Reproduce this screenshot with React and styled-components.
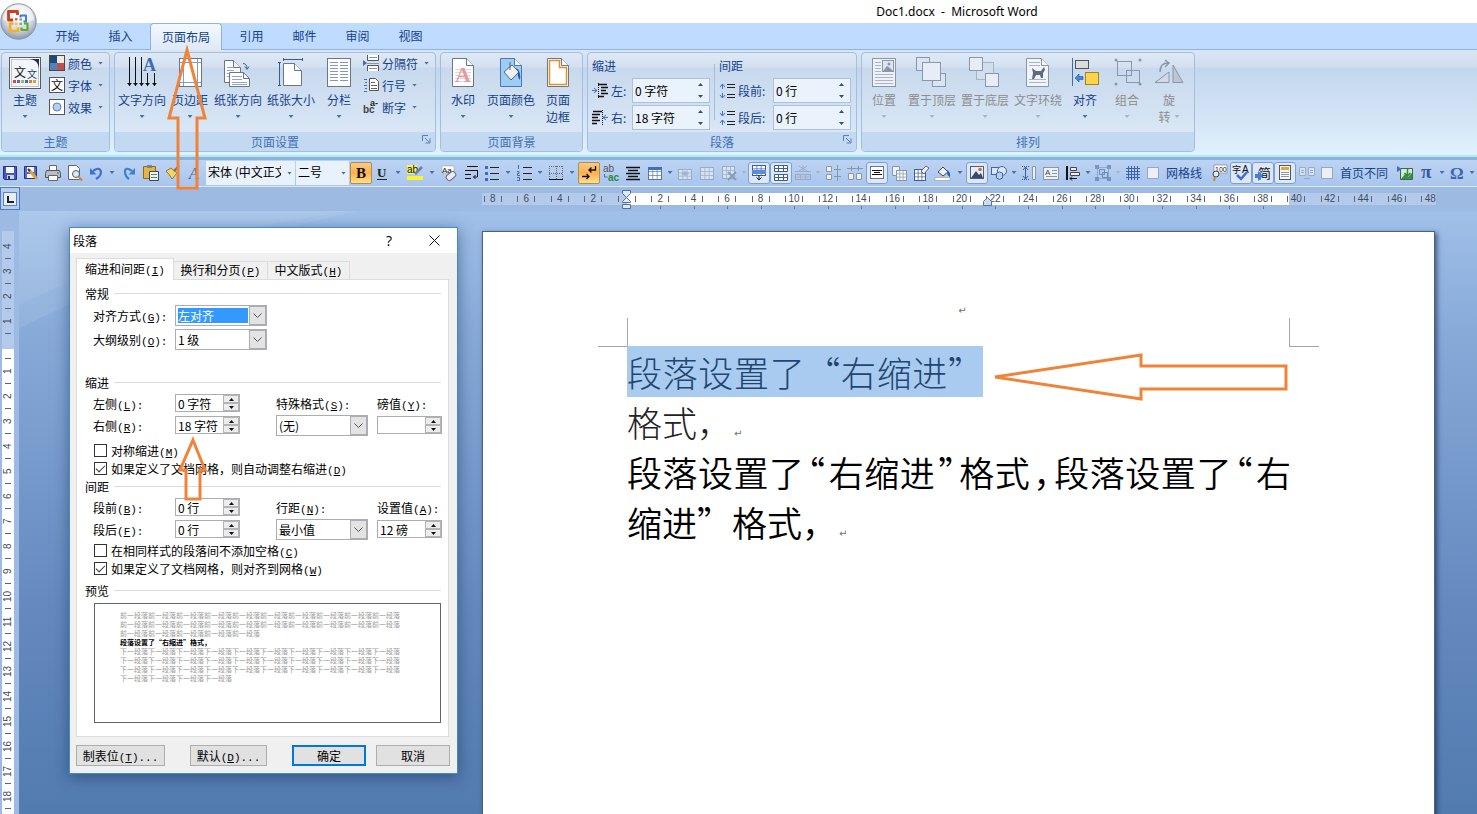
import React from "react";
import styled, { createGlobalStyle, css } from "styled-components";

const SANS = `"Noto Sans CJK SC", "Noto Sans", sans-serif`;
const ORANGE = "#f0833a";

const GlobalStyle = createGlobalStyle`
  *, *::before, *::after { box-sizing: border-box; }
  body { margin: 0; font-family: ${SANS}; font-size: 12px; color: #000; }
  button, input, select { font: inherit; color: inherit; margin: 0; padding: 0; border: 0; background: none; border-radius: 0; }
  button, select { cursor: pointer; }
  svg { display: block; flex: none; overflow: visible; }
`;

/* ---------- window frame ---------- */

const Window = styled.div`
  position: relative;
  display: flex;
  flex-direction: column;
  height: 100vh;
  overflow: hidden;
  background: #9dbbe2;
`;

const TitleBar = styled.header`
  flex: none;
  display: flex;
  align-items: center;
  justify-content: center;
  height: 23px;
  padding-left: 437px;
  background: #fff;
  font-family: "Noto Sans", ${SANS};
  font-size: 12px;
  white-space: pre;
`;

const OrbButton = styled.button`
  position: absolute;
  left: 0;
  top: 3px;
  z-index: 2;
`;

const TabStrip = styled.nav`
  flex: none;
  display: flex;
  align-items: flex-end;
  height: 27px;
  padding-left: 41px;
  background: #bfdbff;
  border-bottom: 1px solid #8db2e3;
`;

const RibbonTab = styled.button`
  width: ${(p) => (p.$active ? 72 : 53)}px;
  height: 26px;
  line-height: 26px;
  color: #15428b;
  ${(p) =>
    p.$active &&
    css`
      height: 27px;
      line-height: 24px;
      margin: 0 3px -1px 3px;
      border: 1px solid #8db2e3;
      border-bottom: 0;
      border-radius: 4px 4px 0 0;
      background: linear-gradient(#f3f8fe, #dde9f7);
    `}
`;

/* ---------- ribbon ---------- */

const Ribbon = styled.section`
  flex: none;
  display: flex;
  gap: 4px;
  height: 107px;
  padding: 2px 1px 3px;
  background: linear-gradient(#dbe6f4 0, #cfddef 17px, #c4d6ec 18px, #d7e8f8 80px, #dff2fd 104px);
  border-bottom: 2px solid #a9ecf5;
  overflow: hidden;
`;

const GroupBox = styled.div`
  flex: none;
  display: flex;
  flex-direction: column;
  width: ${(p) => p.$width}px;
  border: 1px solid #a3bfdf;
  border-radius: 4px;
  background: linear-gradient(#dfe9f5 0, #d3e0f1 14px, #c8d9ed 15px, #d9e7f6 80px);
  overflow: hidden;
`;

const GroupBody = styled.div`
  flex: 1;
  display: flex;
  align-items: flex-start;
  padding-top: 2px;
`;

const GroupLabel = styled.div`
  position: relative;
  height: 19px;
  line-height: 19px;
  text-align: center;
  color: #3f6fb6;
  background: #c2d9f1;
`;

const Launcher = styled.button`
  position: absolute;
  right: 4px;
  top: 3px;
`;

const BigButton = styled.button`
  display: flex;
  flex-direction: column;
  align-items: center;
  width: ${(p) => p.$width}px;
  padding-top: 2px;
  line-height: 17px;
  color: ${(p) => (p.disabled ? "#8d8d8d" : "#15428b")};
  white-space: nowrap;
`;

const BigLabel = styled.span`
  margin-top: 2px;
`;

const SecondLine = styled.span`
  display: flex;
  align-items: center;
  gap: 4px;
  height: 17px;
`;

const Triangle = styled.span`
  width: 5px;
  height: 3px;
  background: ${(p) => (p.$dim ? "#a9b4c4" : "#4a6fa5")};
  clip-path: polygon(0 0, 100% 0, 50% 100%);
`;

const SmallColumn = styled.div`
  display: flex;
  flex-direction: column;
  margin-top: -3px;
  padding-left: ${(p) => p.$indent}px;
`;

const SmallButton = styled.button`
  display: flex;
  align-items: center;
  gap: 3px;
  height: 22px;
  color: #15428b;
  white-space: nowrap;
`;

const SmallText = styled.span`
  margin-right: 3px;
`;

const MeasureColumn = styled.div`
  padding-left: 4px;
`;

const MeasureTitle = styled.div`
  height: 22px;
  line-height: 22px;
  color: #15428b;
`;

const MeasureRow = styled.div`
  display: flex;
  align-items: center;
  height: 27px;
`;

const MeasureLabel = styled.label`
  width: ${(p) => p.$width}px;
  padding-left: 3px;
  color: #15428b;
`;

const MeasureField = styled.div`
  display: flex;
  width: 78px;
  height: 25px;
  border: 1px solid #abc1de;
  background: #eaf2fb;
`;

const MeasureInput = styled.input`
  flex: 1;
  min-width: 0;
  padding-left: 2px;
  outline: 0;
`;

const Steps = styled.span`
  display: flex;
  flex-direction: column;
  width: 17px;
`;

const Step = styled.button`
  flex: 1;
  display: grid;
  place-items: center;
`;

const ColumnRule = styled.div`
  width: 1px;
  height: 56px;
  margin: 9px 0 0 4px;
  background: #a3bfdf;
`;

/* ---------- quick access toolbar ---------- */

const QuickBar = styled.section`
  flex: none;
  display: flex;
  align-items: center;
  height: 30px;
  padding-bottom: 1px;
  border-top: 3px solid #8fb2dc;
  border-bottom: 1px solid #dbe9fb;
  background: linear-gradient(#bdd3f2, #a9c6ee);
  overflow: hidden;
`;

const Tool = styled.button`
  flex: none;
  display: grid;
  place-items: center;
  width: ${(p) => p.$width || 22}px;
  height: 22px;
  opacity: ${(p) => (p.disabled ? 0.6 : 1)};
  ${(p) =>
    p.$framed &&
    css`
      border: 1px solid #7e9fd0;
      border-radius: 3px;
      background: #dce8f8;
    `}
  ${(p) =>
    p.$pressed &&
    css`
      border: 1px solid #b08c4f;
      border-radius: 2px;
      background: linear-gradient(#fbc98a, #fdb14f 50%, #ffe08a);
    `}
`;

const ToolCaret = styled.button`
  flex: none;
  display: flex;
  align-items: center;
  justify-content: center;
  width: ${(p) => (p.$tight ? 8 : 12)}px;
  height: 22px;
`;

const ComboBox = styled.div`
  flex: none;
  position: relative;
  width: ${(p) => p.$width}px;
  height: 24px;
  margin-right: 1px;
  background: #e9f1fb;
`;

const ComboSelect = styled.select`
  appearance: none;
  width: 100%;
  height: 24px;
  padding: 0 14px 2px 2px;
  outline: 0;
`;

const ComboCaret = styled.span`
  position: absolute;
  right: 3px;
  top: 11px;
  display: flex;
  pointer-events: none;
`;

const ToolCheck = styled.label`
  flex: none;
  display: flex;
  align-items: center;
  gap: 7px;
  padding: 0 6px 0 3px;
  color: #15428b;
`;

const ToolCheckBox = styled.input.attrs({ type: "checkbox" })`
  appearance: none;
  width: 12px;
  height: 12px;
  border: 1px solid #8ea9cf;
  background: #eceff3;
`;

/* ---------- rulers and document ---------- */

const Workspace = styled.main`
  flex: 1;
  display: grid;
  grid-template: 24px 1fr / 19px 1fr;
  min-height: 0;
`;

const TabCorner = styled.button`
  display: grid;
  place-items: center;
  width: 20px;
  height: 23px;
  border: 1px solid #4f79c0;
  background: #b7cdec;
`;

const RulerRow = styled.div`
  display: flex;
  justify-content: flex-end;
  padding: 6px 41px 0 0;
`;

const HRuler = styled.div`
  position: relative;
  flex: none;
  width: 954px;
  height: 12px;
  background: linear-gradient(90deg, #b3caeb 145px, #fff 145px, #fff 807px, #b3caeb 807px);
`;

const HScale = styled.div`
  display: flex;
  overflow-x: clip;
`;

const HCells = styled.div`
  flex: 1;
  display: flex;
  margin: 0 -11px 0 -6px;
`;

const HCell = styled.span`
  flex: 1 1 0;
  display: flex;
  align-items: center;
  justify-content: center;
  min-width: 0;
  height: 12px;
  font: 10px/12px "Liberation Sans", sans-serif;
  color: #434c5c;
  &::before, &::after {
    content: "";
    width: 1px;
    height: 6px;
    background: #5b6678;
  }
`;

const HNumber = styled.span`
  position: relative;
  width: 16px;
  text-align: center;
  ${(p) =>
    p.$notch &&
    css`
      &::after {
        content: "";
        position: absolute;
        left: 8px;
        top: 13px;
        width: 1px;
        height: 3px;
        background: #5d7ba8;
      }
    `}
`;

const IndentMark = styled.svg`
  position: absolute;
  left: ${(p) => p.$left}px;
  top: ${(p) => p.$top}px;
`;

const RulerColumn = styled.div`
  display: flex;
  padding: 20px 5px 0 2px;
  overflow: hidden;
  min-height: 0;
`;

const VRuler = styled.div`
  flex: 1;
  padding-top: 3px;
  background: linear-gradient(#b3caeb 118px, #fff 118px);
`;

const VCell = styled.span`
  display: flex;
  align-items: center;
  height: 25px;
  writing-mode: vertical-rl;
  transform: rotate(180deg);
  justify-content: center;
  position: relative;
  width: 12px;
  font: 10px/12px "Liberation Sans", sans-serif;
  color: #434c5c;
  &::after {
    content: "";
    position: absolute;
    left: 3px;
    top: 0;
    width: 6px;
    height: 1px;
    background: #5b6678;
  }
`;

const Canvas = styled.div`
  position: relative;
  display: flex;
  justify-content: flex-end;
  padding: 20px 42px 0 0;
  min-height: 0;
  overflow: hidden;
  background: linear-gradient(#a0c0e9 0, #88aad9 120px, #7699cb 260px, #6489bf 400px, #527bb0 603px);
`;

const Swoosh = styled.svg`
  position: absolute;
  left: 0;
  top: 0;
`;

const Page = styled.article`
  position: relative;
  flex: none;
  width: 953px;
  min-height: 600px;
  border: 1px solid #4a6180;
  border-bottom: 0;
  background: #fff;
  box-shadow: 2px 2px 5px rgba(20, 40, 80, 0.7);
`;

const HeaderLine = styled.div`
  padding: 69px 0 0 6px;
  height: 86px;
  text-align: center;
  line-height: 16px;
`;

const CropRow = styled.div`
  display: flex;
  justify-content: space-between;
  margin: 0 115px;
`;

const CropMark = styled.span`
  width: 30px;
  height: 29px;
  border: 0 solid #a6a6a6;
  border-bottom-width: 1px;
  border-${(p) => p.$side}-width: 1px;
`;

const TextArea = styled.div`
  padding: 0 143px 0 144px;
`;

const Paragraph = styled.p`
  margin: 0;
  padding-right: ${(p) => p.$indent || 0}px;
  font-size: 35px;
  line-height: 50px;
  font-weight: ${(p) => (p.$strong ? 350 : 300)};
  color: ${(p) => (p.$strong ? "#000" : "#222")};
  text-align: justify;
`;

const Selection = styled.span`
  background: #a9cbf0;
  color: #1f4670;
`;

const Punct = styled.span`
  padding: 0 3px;
  font-feature-settings: "halt";
`;

const ReturnMark = styled.span`
  margin-left: 2px;
  font: 10px "DejaVu Sans", sans-serif;
  color: #707070;
`;

const Arrow = styled.svg`
  position: absolute;
  left: ${(p) => p.$left}px;
  top: ${(p) => p.$top}px;
  z-index: 3;
  pointer-events: none;
`;

/* ---------- paragraph dialog ---------- */

const DialogBox = styled.div.attrs({ role: "dialog", "aria-label": "段落" })`
  position: absolute;
  left: 69px;
  top: 227px;
  z-index: 2;
  width: 389px;
  padding-bottom: 7px;
  border: 1px solid #3f8ecb;
  background: #f0f0f0;
  box-shadow: 0 3px 14px rgba(20, 40, 80, 0.5);
`;

const DialogTitle = styled.div`
  display: flex;
  align-items: center;
  height: 25px;
  padding: 0 17px 0 3px;
  background: #fff;
`;

const DialogName = styled.h2`
  flex: 1;
  margin: 0;
  font-size: 12px;
  font-weight: 400;
`;

const HelpButton = styled.button`
  width: 14px;
  margin-right: 33px;
  font: 14px "Open Sans", sans-serif;
`;

const DialogTabs = styled.div`
  display: flex;
  align-items: flex-end;
  height: 26px;
  padding-left: 6px;
`;

const DialogTab = styled.button`
  width: ${(p) => p.$width}px;
  height: 18px;
  border: 1px solid #dcdcdc;
  border-left-width: 0;
  border-bottom: 0;
  line-height: 16px;
  ${(p) =>
    p.$active &&
    css`
      position: relative;
      z-index: 1;
      height: 22px;
      margin-bottom: -1px;
      border-left-width: 1px;
      background: #fff;
    `}
`;

const Panel = styled.form`
  margin: 0 8px 0 6px;
  padding: 4px 7px 13px 8px;
  border: 1px solid #dcdcdc;
  background: #fff;
`;

const Legend = styled.h3`
  display: flex;
  align-items: center;
  gap: 5px;
  height: 18px;
  margin: ${(p) => p.$space || 0}px 0 1px;
  font-size: 12px;
  font-weight: 400;
  &::after {
    content: "";
    flex: 1;
    height: 1px;
    background: #dcdcdc;
  }
`;

const FieldGrid = styled.div`
  display: grid;
  grid-template-columns: 82px 101px 101px 65px;
  grid-auto-rows: ${(p) => p.$row}px;
  align-items: center;
  margin-left: 8px;
`;

const Mono = styled.span`
  font-family: "Liberation Mono", monospace;
  font-size: 11px;
`;

const DropBox = styled.div`
  position: relative;
  width: 92px;
  height: 21px;
  border: 1px solid #abadb3;
  background: #fff;
`;

const DropSelect = styled.select`
  appearance: none;
  display: block;
  width: 100%;
  height: 19px;
  padding: 2px 18px 2px 2px;
  line-height: 15px;
  outline: 0;
  ${(p) =>
    p.$focused &&
    css`
      color: #fff;
      background: linear-gradient(#3399ff, #3399ff) content-box;
    `}
`;

const DropArrow = styled.span`
  position: absolute;
  right: 0;
  top: 0;
  display: grid;
  place-items: center;
  width: 17px;
  height: 19px;
  border: 1px solid #abadb3;
  background: #e3e3e3;
  pointer-events: none;
`;

const SpinBox = styled.div`
  display: flex;
  width: 65px;
  height: 18px;
  border: 1px solid #abadb3;
  background: #fff;
`;

const SpinInput = styled.input`
  flex: 1;
  min-width: 0;
  padding-left: 2px;
  outline: 0;
`;

const SpinSteps = styled.span`
  display: flex;
  flex-direction: column;
  width: 16px;
`;

const SpinStep = styled.button`
  flex: 1;
  display: grid;
  place-items: center;
  border: 1px solid #b4b4b4;
  background: #ececec;
`;

const CheckList = styled.div`
  margin: ${(p) => p.$space}px 0 0 9px;
`;

const CheckRow = styled.label`
  display: flex;
  align-items: center;
  gap: 4px;
  height: 18px;
`;

const CheckInput = styled.input.attrs({ type: "checkbox" })`
  appearance: none;
  display: grid;
  place-items: center;
  width: 13px;
  height: 13px;
  border: 1px solid #333;
  background: #fff;
  &:checked::before {
    content: "";
    width: 9px;
    height: 5px;
    border: solid #333;
    border-width: 0 0 1px 1px;
    transform: translateY(-1px) rotate(-45deg);
  }
`;

const Preview = styled.div`
  height: 120px;
  margin: 4px 0 0 9px;
  padding: 7px 25px;
  border: 1px solid #646464;
  font-size: 7px;
  line-height: 9px;
  color: #9a9a9a;
  white-space: nowrap;
`;

const PreviewLine = styled.div`
  height: 9px;
  color: ${(p) => (p.$current ? "#000" : "inherit")};
  font-weight: ${(p) => (p.$current ? 700 : 400)};
`;

const DialogActions = styled.div`
  display: flex;
  gap: 10px;
  margin: 8px 7px 0 6px;
`;

const ActionButton = styled.button`
  width: ${(p) => p.$width}px;
  height: 21px;
  margin-right: ${(p) => (p.$apart ? 15 : 0)}px;
  border: ${(p) => (p.$primary ? "2px solid #0078d7" : "1px solid #adadad")};
  background: #e1e1e1;
`;

/* ---------- drawings ---------- */

const B = "#3f5f94";
const G = "#8a97ab";

const Doc = ({ x = 5.5, y = 1.5, w = 21, h = 28, fill = "#fff", stroke = "#6c7688" }) => (
  <>
    <path d={`M${x} ${y}h${w - 7}l7 7v${h - 7}h${-w}z`} fill={fill} stroke={stroke} />
    <path d={`M${x + w - 7} ${y}v7h7`} fill="#f4f7fb" stroke={stroke} />
  </>
);

const lines = (x1, x2, ys, color = "#8fa5c8") =>
  ys.map((y) => <path key={`${x1}-${y}`} d={`M${x1} ${y}.5H${x2}`} stroke={color} />);

const big = {
  theme: (
    <>
      <rect x=".5" y=".5" width="31" height="31" fill="#fff" stroke="#5a5a5a" />
      <rect x="2.5" y="2.5" width="27" height="27" fill="#f2f6fb" stroke="#b8c2d0" />
      <path d="M21 2h9v9q-1-8-9-9z" fill="#1d2f57" />
      <text x="5" y="20" fontSize="12">文</text>
      <text x="18" y="21" fontSize="10" fill="#24406e">文</text>
      {["#c0504d", "#7a5fa0", "#9bbb59", "#3d6fb5", "#d8812f", "#e0a030"].map((c, i) => (
        <rect key={c} x={4 + i * 4} y="23" width="3" height="3" fill={c} />
      ))}
    </>
  ),
  textdir: (
    <>
      <path d="M3.500 0v29M9.500 0v29M15.500 0v29M21.500 16v13M28.500 16v13" stroke="#111" />
      <path d="M1 26h5l-2.500 3zM7 26h5l-2.500 3zM13 26h5l-2.500 3zM19 26h5l-2.500 3zM26 26h5l-2.500 3z" fill="#111" />
      <text x="17" y="14" fontSize="18" fontWeight="700" fontFamily="Liberation Serif" fill="#3d6cb0">A</text>
    </>
  ),
  margins: (
    <>
      <rect x="5.500" y="1.500" width="22" height="28" fill="#fff" stroke="#6c7688" />
      <path d="M9.500 2v27M23.500 2v27M6 5.500h21M6 25.500h21" stroke="#7e9bcd" />
    </>
  ),
  orient: (
    <>
      <Doc x={2.5} y={3.5} w={16} h={22} />
      {lines(5, 12, [10, 13, 16, 19])}
      <path d="M7.500 15.500h14l6 6v8h-20z" fill="#fff" stroke="#6c7688" />
      <path d="M21.500 15.500v6h6" fill="none" stroke="#6c7688" />
      {lines(10, 20, [19, 22])}
      {lines(10, 25, [25, 27])}
      <path d="M21 6.500q4 0 4 5m-2-2l2 3 2-3" fill="none" stroke="#3f5f94" />
    </>
  ),
  size: (
    <>
      <Doc x={8.5} y={6.5} w={18} h={22} />
      <path d="M9 2.500h18M8.500 1v3M27.500 1v3M4.500 6v23M3 5.500h3M3 28.500h3" stroke="#3b5a92" fill="none" />
    </>
  ),
  columns: (
    <>
      <rect x="4.500" y="1.500" width="23" height="28" fill="#fff" stroke="#6c7688" />
      {lines(7, 15, [5, 8, 11, 14, 17, 20, 23], "#8398bd")}
      {lines(17, 25, [5, 8, 11, 14, 17, 20, 23], "#8398bd")}
    </>
  ),
  watermark: (
    <>
      <Doc />
      {lines(8, 24, [12, 15, 18, 21, 24], "#d7dce4")}
      <text x="8" y="25" fontSize="22" fontWeight="700" fontFamily="Liberation Serif" fill="#e79a9c">A</text>
    </>
  ),
  pagecolor: (
    <>
      <Doc fill="#9ccdf5" stroke="#4b78b4" />
      <path d="M9 15l8-7 7 7-8 8z" fill="#eef2f7" stroke="#5b6676" />
      <path d="M15 5v8" stroke="#5b6676" />
      <path d="M21 11q5 2 4 12-3-3-2-9z" fill="#24589f" />
    </>
  ),
  pageborder: (
    <>
      <Doc />
      <path d="M7.500 3.500h10v7h7v17h-17z" fill="none" stroke="#e2902c" strokeWidth="1.5" />
    </>
  ),
  position: (
    <>
      <rect x="4.500" y="1.500" width="23" height="28" fill="#eef2f8" stroke={G} />
      <rect x="14.500" y="3.500" width="11" height="11" fill="#dfe6f0" stroke={G} />
      <path d="M15 14l4-5 3 2 3 3z" fill={G} />
      <circle cx="21" cy="7" r="1.500" fill={G} />
      {lines(7, 13, [5, 8, 11, 14], "#a9b5c7")}
      {lines(7, 25, [17, 20, 23, 26], "#a9b5c7")}
    </>
  ),
  front: (
    <>
      <rect x=".5" y=".5" width="13" height="13" fill="#dbe4f1" stroke={G} />
      <rect x="16.500" y="16.500" width="13" height="13" fill="#dbe4f1" stroke={G} />
      <rect x="6.500" y="5.500" width="18" height="18" fill="#e6edf7" stroke={G} />
    </>
  ),
  back: (
    <>
      <rect x="7.500" y="5.500" width="17" height="17" fill="#d3deed" stroke="#a9b5c7" />
      <rect x=".5" y=".5" width="13" height="13" fill="#e6edf7" stroke={G} />
      <rect x="16.500" y="16.500" width="13" height="13" fill="#e6edf7" stroke={G} />
    </>
  ),
  wrap: (
    <>
      <Doc x={4.5} y={1.5} w={22} h={28} fill="#f1f4f9" stroke={G} />
      {lines(7, 18, [5, 8], "#a9b5c7")}
      {lines(7, 24, [22, 25], "#a9b5c7")}
      <path d="M10 11l4 3h5l3-4 1 3-2 3v5h-2l-1-3-4 0-2 4h-2l1-6z" fill="#5c6b83" />
    </>
  ),
  align: (
    <>
      <path d="M3.500 1v28" stroke="#3d6cb0" />
      <rect x="6.500" y="3.500" width="13" height="8" fill="#dcdcdc" stroke="#555" />
      <rect x="16.500" y="15.500" width="13" height="12" fill="#fbd34c" stroke="#a8801c" />
      <path d="M6 21l4-4v2.500h4v3h-4v2.500z" fill="#4b86d8" stroke="#24509a" strokeWidth=".6" />
    </>
  ),
  group: (
    <>
      <rect x="6.500" y="4.500" width="14" height="14" fill="none" stroke={G} />
      <rect x="15.500" y="13.500" width="13" height="12" fill="none" stroke={G} />
      {[[5, 3], [29, 3], [5, 27], [29, 27]].map(([x, y]) => (
        <circle key={`${x}${y}`} cx={x} cy={y} r="1.500" fill={G} />
      ))}
    </>
  ),
  rotate: (
    <>
      <path d="M2 25.500L16 15v10.500z" fill="#d3dae5" stroke={G} />
      <path d="M20 25.500V8l10 17.500z" fill="#bcc6d4" stroke={G} />
      <path d="M7 15q0-9 8-9m-3-3l4 3-4 4" fill="none" stroke={G} strokeWidth="1.500" />
    </>
  ),
};

const grid = (x, y, w, h, stroke = B, fill = "#fff") => (
  <>
    <rect x={x} y={y} width={w} height={h} fill={fill} stroke={stroke} />
    <path
      d={`M${x} ${y + h / 3}h${w}M${x} ${y + (2 * h) / 3}h${w}M${x + w / 3} ${y}v${h}M${x + (2 * w) / 3} ${y}v${h}`}
      stroke={stroke}
      strokeWidth=".7"
    />
  </>
);

const small = {
  colors: (
    <>
      <path d="M0 0h8v8H0z" fill="#1f497d" />
      <path d="M8 0h8v8H8z" fill="#eeece1" />
      <path d="M0 8h8v8H0z" fill="#4f81bd" />
      <path d="M8 8h8v8H8z" fill="#c0504d" />
      <rect x=".5" y=".5" width="15" height="15" fill="none" stroke="#4a4a4a" />
    </>
  ),
  fonts: (
    <>
      <rect x=".5" y=".5" width="15" height="15" fill="#fff" stroke="#555" />
      <text x="2" y="13" fontSize="12">文</text>
    </>
  ),
  effects: (
    <>
      <rect x=".5" y=".5" width="15" height="15" fill="#fff" stroke="#555" />
      <circle cx="8" cy="8" r="4" fill="#b9cdf0" stroke="#5b83c4" />
    </>
  ),
  breaks: (
    <>
      <path d="M4.500 0v5.500h11V0M4.500 16v-5.500h11V16" fill="#fff" stroke="#555" />
      <path d="M6 2.500h8M6 13.500h8M4 8.500h12" stroke="#8398bd" />
      <path d="M0 5l4 3-4 3z" fill="#3d6cb0" />
    </>
  ),
  linenum: (
    <>
      <path d="M6.500 1.500h6l3 3v9h-9z" fill="#fff" stroke="#555" />
      <path d="M8 5.500h4M8 8.500h6M8 11.500h6" stroke="#666" />
      <path d="M1 2.500h3M2 5.500h2M1 8.500h3M2 11.500h2M1 14.500h3" stroke="#3d6cb0" />
    </>
  ),
  hyphen: (
    <>
      <text x="0" y="14" fontSize="10" fontWeight="700" fontFamily="Liberation Sans" fill="#444">bc</text>
      <text x="7" y="7" fontSize="9" fontWeight="700" fontFamily="Liberation Sans" fill="#222">a-</text>
    </>
  ),
  indentLeft: (
    <>
      <path d="M6 1.500h9M9 4.500h7M9 7.500h5M9 10.500h7M6 13.500h6" stroke="#111" strokeWidth="1.500" />
      <path d="M6.500 0v16" stroke="#111" strokeDasharray="1 1" />
      <path d="M0 7.500h5M2 5l3 2.500L2 10" stroke="#3f6fc4" fill="none" />
    </>
  ),
  indentRight: (
    <>
      <path d="M1 1.500h9M0 4.500h8M0 7.500h6M0 10.500h8M0 13.500h5" stroke="#111" strokeWidth="1.500" />
      <path d="M10.500 0v16" stroke="#111" strokeDasharray="1 1" />
      <path d="M16 7.500h-5M14 5l-3 2.500 3 2.500" stroke="#3f6fc4" fill="none" />
    </>
  ),
  spaceBefore: (
    <>
      <path d="M8 1.500h8M8 4.500h8M8 11.500h8M8 14.500h8" stroke="#222" />
      <path d="M3.500 1v5M1 4l2.500-3L6 4M3.500 10v5M1 12l2.500 3L6 12" stroke="#3f6fc4" fill="none" />
    </>
  ),
  spaceAfter: (
    <>
      <path d="M8 1.500h8M8 4.500h8M8 11.500h8M8 14.500h8" stroke="#222" />
      <path d="M3.500 1v5M1 3l2.500 3L6 3M3.500 10v5M1 13l2.500-3L6 13" stroke="#3f6fc4" fill="none" />
    </>
  ),
  save: (
    <>
      <path d="M1.500 1.500h13v13h-12l-1-1z" fill="#4757b8" stroke="#27327c" />
      <path d="M4 2h8v6H4z" fill="#f4f6fb" />
      <path d="M5 10h7v4H5z" fill="#cfd5e6" />
      <path d="M6 11h2v3H6z" fill="#27327c" />
    </>
  ),
  saveAs: (
    <>
      <path d="M1.500 1.500h12v12h-12z" fill="#5b6bc2" stroke="#27327c" />
      <path d="M4 2h7v5H4zM4 9h7v4H4z" fill="#f4f6fb" />
      <path d="M6 5l8 9" stroke="#e0a33a" strokeWidth="3" />
      <path d="M5 4l2 2" stroke="#333" strokeWidth="2" />
    </>
  ),
  print: (
    <>
      <path d="M4.500 6V.5h7V6" fill="#fff" stroke="#666" />
      <path d="M1.500 5.500h13l1 3v4H.5v-4z" fill="#b9bec9" stroke="#555" />
      <path d="M3.500 10.500h9v5h-9z" fill="#fff" stroke="#666" />
      <path d="M12 8h2" stroke="#4a9e3d" strokeWidth="1.500" />
    </>
  ),
  preview: (
    <>
      <path d="M1.500.5h8l3 3v11h-11z" fill="#fff" stroke="#666" />
      <circle cx="9" cy="9" r="3.500" fill="#d8ebfa" stroke="#4d5b72" />
      <path d="M11.500 11.500l3.500 4" stroke="#c98d2f" strokeWidth="2" />
    </>
  ),
  undo: (
    <>
      <path d="M5 6q7-5 8 1 0 4-5 7" fill="none" stroke="#3f6fd0" strokeWidth="2.200" />
      <path d="M2 3v6.500h6.500z" fill="#3f6fd0" />
    </>
  ),
  redo: (
    <>
      <path d="M11 6Q4 1 4 7q0 4 4 7" fill="none" stroke="#3f7fd0" strokeWidth="2.200" />
      <path d="M14 3v6.500H7.500z" fill="#3f7fd0" />
    </>
  ),
  paste: (
    <>
      <path d="M.5 1.500h12v12H.5z" fill="#e4b448" stroke="#8f6a1b" />
      <path d="M4 0h5v3H4z" fill="#7a8190" />
      <path d="M6.500 6.500h9v9h-9z" fill="#eef3fb" stroke="#445" />
      <path d="M8 9.500h6M8 12.500h6" stroke="#4d8a5a" />
    </>
  ),
  brush: (
    <>
      <path d="M1 6l5-3 6 5-5 6q-2-4-6-8z" fill="#f2d568" stroke="#9a7a25" />
      <path d="M9 6l5-5" stroke="#7a6a50" strokeWidth="2" />
    </>
  ),
  letterA: (
    <text x="2" y="14" fontSize="16" fontStyle="italic" fontFamily="Liberation Serif" fill="#4a5f8c">A</text>
  ),
  bold: (
    <text x="3" y="13" fontSize="15" fontWeight="700" fontFamily="Liberation Serif">B</text>
  ),
  underline: (
    <>
      <text x="3" y="12" fontSize="13" fontWeight="700" fontFamily="Liberation Serif" fill="#222">U</text>
      <path d="M3 14.500h10" stroke="#222" />
    </>
  ),
  highlight: (
    <>
      <path d="M0 0h10v9H0z" fill="#f7f36a" />
      <text x="0" y="8" fontSize="10" fontFamily="Liberation Sans">ab</text>
      <path d="M8 9l7-7" stroke="#6a7fa6" strokeWidth="2.500" />
      <path d="M0 11h16v4H0z" fill="#fbf32c" />
    </>
  ),
  clearFormat: (
    <>
      <path d="M1 1h12v7H1z" fill="#fff" stroke="#999" strokeWidth=".5" />
      <text x="1" y="8" fontSize="8" fontFamily="Liberation Sans">Aa</text>
      <rect x="5" y="8" width="10" height="6" rx="2" fill="#e8edf6" stroke="#667" transform="rotate(-40 10 11)" />
    </>
  ),
  wrapLine: (
    <path d="M4 1.500h11M2 5.500h13M2 9.500h6M2 13.500h6M14.500 6v6h-4m2-2l-2 2 2 2" stroke="#111" fill="none" />
  ),
  bullets: (
    <>
      <path d="M6 2.500h9M6 8.500h9M6 14.500h9" stroke="#222" />
      <path d="M1 1h3v3H1zM1 7h3v3H1zM1 13h3v3H1z" fill="#4669a8" />
    </>
  ),
  numbering: (
    <>
      <path d="M7 2.500h9M7 8.500h9M7 14.500h9" stroke="#222" />
      <path d="M2.500 0v4M1 6.500h2v2H1.500v2H4M1 12.500h2.500v3H1" stroke="#4669a8" fill="none" />
    </>
  ),
  borders: (
    <>
      <path d="M1.500 1v14M8.500 1v14M14.500 1v14M1 1.500h14M1 8.500h14" stroke="#667" strokeDasharray="1 1" />
      <path d="M1 14.500h14" stroke="#111" />
    </>
  ),
  showMarks: (
    <>
      <path d="M14.500 1v4H8m2.500-2.500L8 5l2.500 2.500" fill="none" stroke="#111" strokeWidth="1.300" />
      <path d="M1 11.500h7m-2.500-2.500L8 11.500 5.500 14" fill="none" stroke="#111" strokeWidth="1.300" />
    </>
  ),
  replace: (
    <>
      <text x="0" y="7" fontSize="10" fontFamily="Liberation Sans" fill="#555">ab</text>
      <text x="5" y="16" fontSize="10" fontWeight="700" fontFamily="Liberation Sans" fill="#2b8a3a">ac</text>
      <path d="M1.500 9v3h3" fill="none" stroke="#3f6fc4" />
    </>
  ),
  justify: <path d="M1 2.500h14M3 5.500h10M1 8.500h14M3 11.500h10M1 14.500h14" stroke="#111" strokeWidth="1.400" />,
  table: (
    <>
      {grid(1.5, 2.5, 13, 12, "#5577ad")}
      <path d="M1 2h14v3H1z" fill="#3f6fc4" />
    </>
  ),
  tableGrey: grid(1.5, 2.5, 13, 12, G, "#eef2f8"),
  tableEdit: (
    <>
      {grid(1.5, 4.5, 13, 10, G, "#eef2f8")}
      <path d="M4 9q4-6 8 0l-4 2z" fill="#9ba7ba" />
    </>
  ),
  tableDelete: (
    <>
      {grid(1.5, 1.5, 12, 12, G, "#eef2f8")}
      <path d="M7 7l8 8M15 7l-8 8" stroke="#6f7d95" strokeWidth="2" />
    </>
  ),
  rowInsert: (
    <>
      {grid(1.5, 0.5, 13, 10, B)}
      <path d="M1 5h14v4H1z" fill="#5b8be0" />
      <path d="M8 10v5m-2.500-2.500L8 15l2.500-2.500" fill="none" stroke="#222" />
    </>
  ),
  rowSplit: (
    <>
      <path d="M1.500.5h13v6h-13zM1 3.500h14M5.500 0v7M10.500 0v7" fill="#fff" stroke={B} />
      <path d="M1.500 9.500h13v6h-13zM1 12.500h14M5.500 9v7M10.500 9v7" fill="#fff" stroke={B} />
    </>
  ),
  tableSplit: (
    <>
      {grid(0.5, 9.5, 15, 5, G, "#c9d4e6")}
      <path d="M0 6.500h16M8 0v7M4 1l8 5M12 1L4 6" stroke={G} />
    </>
  ),
  distributeRows: (
    <path d="M1.500 1.500h5v5h-5zM1.500 9.500h5v5h-5zM9 4.500h7M9 11.500h7M12.500 0v16" stroke={G} fill="#eef2f8" />
  ),
  distributeCols: (
    <path d="M1.500 8.500h5v6h-5zM9.500 8.500h5v6h-5zM0 3.500h16M4.500 1v5M11.500 1v5" stroke={G} fill="#eef2f8" />
  ),
  centerCell: (
    <>
      <rect x="1.500" y="1.500" width="13" height="12" fill="#fff" stroke="#6c7688" />
      <path d="M3 5.500h10M5 7.500h6M3 9.500h10" stroke="#111" />
    </>
  ),
  tableCopy: (
    <>
      <path d="M1.500 1.500h7v9h-7z" fill="#eef2f8" stroke={G} />
      {grid(5.5, 5.5, 10, 10, G, "#f7f9fc")}
    </>
  ),
  tableErase: (
    <>
      {grid(1.5, 4.5, 11, 11, B)}
      <path d="M8 6l5-5 3 2-5 6z" fill="#eef1f6" stroke="#667" />
    </>
  ),
  bucket: (
    <>
      <path d="M3 7l5-5 5 5-5 4z" fill="#eef1f6" stroke="#445" />
      <path d="M12 5q4 2 3 7-3-1-3-5z" fill="#2d63b3" />
      <path d="M0 12.500h15v3H0z" fill="#fff" stroke="#999" strokeWidth=".6" />
    </>
  ),
  picture: (
    <>
      <rect x="1.500" y="1.500" width="13" height="12" fill="#e4edf8" stroke="#4f607d" />
      <path d="M2 13l5-7 3 4 2-2 2 5z" fill="#39496b" />
      <circle cx="11" cy="4.500" r="1.800" fill="#e3652b" />
    </>
  ),
  shapes: (
    <>
      <rect x=".5" y="2.500" width="9" height="7" fill="#dbe7f8" stroke="#44679f" />
      <circle cx="11" cy="6" r="4.500" fill="#dbe7f8" stroke="#44679f" />
      <path d="M5.500 8v5q3 3 6 0V8q-3-2-6 0z" fill="#b7cff0" stroke="#44679f" />
    </>
  ),
  textWidth: (
    <>
      <path d="M1 1.500h7M1 14.500h7" stroke={B} strokeDasharray="1 1" />
      <path d="M4.500 2v12M2 5l2.500-3L7 5M2 11l2.500 3L7 11" stroke={B} fill="none" />
      <path d="M11.500 1.500h3v13h-3z" fill="#eef2f8" stroke={G} />
    </>
  ),
  textBox: (
    <>
      <rect x=".5" y="2.500" width="15" height="12" fill="#eef2f8" stroke={G} />
      <text x="2" y="10" fontSize="8" fontFamily="Liberation Sans" fill="#445">A</text>
      <path d="M9 5.500h5M9 8.500h5M3 11.500h11" stroke={G} />
    </>
  ),
  alignLeft: (
    <>
      <path d="M2 1v14" stroke="#111" strokeWidth="2" />
      <path d="M5.500 2.500h6v3h-6zM5.500 7.500h9v3h-9z" fill="#eef2f8" stroke="#445" />
      <path d="M5 13.500h7m-5-2l-2 2 2 2" stroke="#111" fill="none" />
    </>
  ),
  groupSmall: (
    <>
      <path d="M2.500 2.500h11v11h-11z" fill="none" stroke={B} strokeDasharray="1 1" />
      <path d="M4.500 4.500h5v5h-5zM7.500 7.500h5v5h-5z" fill="none" stroke={B} />
      <path d="M0 0h4v4H0zM12 0h4v4h-4zM0 12h4v4H0zM12 12h4v4h-4z" fill="#5b6f94" />
    </>
  ),
  gridlines: <path d="M1 3.500h14M1 6.500h14M1 9.500h14M1 12.500h14M3.500 1v14M6.500 1v14M9.500 1v14M12.500 1v14" stroke="#3a62ae" />,
  zoom100: (
    <>
      <rect x="3" y="0" width="13" height="8" fill="#fff" stroke="#777" strokeWidth=".6" />
      <text x="4" y="7" fontSize="7" fontFamily="Liberation Sans">100</text>
      <circle cx="5" cy="9" r="3" fill="#dcebf9" stroke="#445" />
      <path d="M4 12l-1 4" stroke="#c98d2f" strokeWidth="2" />
    </>
  ),
  spelling: (
    <>
      <text x="-1" y="8" fontSize="9">字</text>
      <text x="9" y="8" fontSize="10" fontFamily="Liberation Sans">A</text>
      <path d="M4 10l4 4 6-7" fill="none" stroke="#3f6fd0" strokeWidth="2.500" />
    </>
  ),
  simplify: (
    <>
      <text x="3" y="13" fontSize="13">简</text>
      <path d="M0 9h3V6l5 5-5 5v-3H0z" fill="#3f7fe0" />
    </>
  ),
  headerFooter: (
    <>
      <rect x="2.500" y=".5" width="11" height="14" fill="#fff" stroke="#555" />
      <path d="M4 2h8v3H4z" fill="#f0a030" />
      <path d="M4 7.500h8M4 9.500h8M4 11.500h8" stroke="#8398bd" />
    </>
  ),
  mailMerge: (
    <>
      <path d="M.5 2.500h6v8h-6zM9.500 2.500h6v8h-6z" fill="#eef2f8" stroke={G} />
      <path d="M2 5.500h3M2 7.500h3M11 5.500h3M11 7.500h3M5 13.500h6" stroke={G} />
    </>
  ),
  insertPicture: (
    <>
      <path d="M3.500 3.500h12v11h-12z" fill="#d4ecd6" stroke="#3c6a48" />
      <path d="M4 14l4-5 3 3 4-4v6z" fill="#3f8e4c" />
      <path d="M0 1l5 3-5 3z" fill="#3f6fd0" />
      <path d="M10.500 4v7m-3-3l3 3 3-3" stroke="#2a8a35" strokeWidth="1.500" fill="none" />
    </>
  ),
  pi: <text x="2" y="13" fontSize="19" fontWeight="700" fontFamily="Liberation Serif" fill="#355a9c">π</text>,
  omega: <text x="1" y="14" fontSize="17" fontWeight="700" fontFamily="Liberation Serif" fill="#3a66ae">Ω</text>,
};

const BigIcon = ({ name }) => (
  <svg width="32" height="32" viewBox="0 0 32 32" aria-hidden="true">
    <g fill="#111" fontFamily={SANS}>{big[name]}</g>
  </svg>
);

const SmallIcon = ({ name }) => (
  <svg width="16" height="16" viewBox="0 0 16 16" aria-hidden="true">
    <g fill="#111" fontFamily={SANS}>{small[name]}</g>
  </svg>
);

const Orb = () => (
  <svg width="38" height="38" viewBox="0 0 38 38" aria-hidden="true">
    <defs>
      <radialGradient id="orb" cx="50%" cy="35%" r="65%">
        <stop offset="0" stopColor="#fdfdfe" />
        <stop offset=".6" stopColor="#d5dae3" />
        <stop offset="1" stopColor="#8b96a8" />
      </radialGradient>
    </defs>
    <circle cx="18.500" cy="18.500" r="17.700" fill="url(#orb)" stroke="#8a93a3" />
    <path d="M3 17a15.500 15.500 0 0 1 31 0q-15 6-31 0z" fill="#fff" opacity=".55" />
    <g fill="none" strokeLinejoin="round">
      <path d="M13 17H8.500V8.500H17.500V12" stroke="#c9401c" strokeWidth="2.800" />
      <path d="M20.500 14.500v-2h5.500v6h-2.500" stroke="#3f7fd0" strokeWidth="2" />
      <path d="M13.500 20.500H10V28h8v-3.500" stroke="#f2b01e" strokeWidth="2.600" />
      <path d="M24 20.500h3.500V27h-6v-2.500" stroke="#5fa832" strokeWidth="2.200" />
    </g>
    <path d="M15 15h2.500v2.500H15z" fill="#e0662a" />
    <path d="M19.500 15.500h2.500v2h-2.500z" fill="#5b93dc" />
    <path d="M15 19.500h2.500V22H15z" fill="#f4c04a" />
    <path d="M19.500 19.500h2.500V22h-2.500z" fill="#7dbb50" />
  </svg>
);

const Chevron = () => (
  <svg width="9" height="5" viewBox="0 0 9 5" aria-hidden="true">
    <path d="M.5.5l4 4 4-4" fill="none" stroke="#555" />
  </svg>
);

const StepGlyph = ({ up, color = "#2f4d85" }) => (
  <svg width="5" height="3" viewBox="0 0 5 3" aria-hidden="true">
    <path d={up ? "M0 3h5L2.500 0z" : "M0 0h5L2.500 3z"} fill={color} />
  </svg>
);

/* ---------- composed parts ---------- */

const Group = ({ title, width, launcher, children }) => (
  <GroupBox $width={width}>
    <GroupBody>{children}</GroupBody>
    <GroupLabel>
      {title}
      {launcher && (
        <Launcher aria-label={`${title}选项`}>
          <svg width="9" height="9" viewBox="0 0 9 9" aria-hidden="true">
            <path d="M.5 6V.5H6M3 3l4 4M8 3.500V8H3.500" fill="none" stroke="#5d7fb3" />
          </svg>
        </Launcher>
      )}
    </GroupLabel>
  </GroupBox>
);

const Command = ({ icon, label, second, width, disabled, noCaret }) => (
  <BigButton $width={width} disabled={disabled}>
    <BigIcon name={icon} />
    <BigLabel>{label}</BigLabel>
    <SecondLine>
      {second}
      {!noCaret && <Triangle $dim={disabled} />}
    </SecondLine>
  </BigButton>
);

const SmallCommand = ({ icon, label }) => (
  <SmallButton>
    <SmallIcon name={icon} />
    <SmallText>{label}</SmallText>
    <Triangle />
  </SmallButton>
);

const Measure = ({ id, icon, label, labelWidth, value }) => (
  <MeasureRow>
    <SmallIcon name={icon} />
    <MeasureLabel htmlFor={id} $width={labelWidth}>{label}</MeasureLabel>
    <MeasureField>
      <MeasureInput id={id} defaultValue={value} />
      <Steps>
        <Step aria-label="增加"><StepGlyph up /></Step>
        <Step aria-label="减少"><StepGlyph /></Step>
      </Steps>
    </MeasureField>
  </MeasureRow>
);

const Key = ({ k, tail = "" }) => (
  <Mono>(<u>{k}</u>){tail}</Mono>
);

const FieldLabel = ({ id, text, k }) => (
  <label htmlFor={id}>{text}<Key k={k} tail=":" /></label>
);

const Drop = ({ id, value, focused }) => (
  <DropBox>
    <DropSelect id={id} $focused={focused} defaultValue={value}>
      <option>{value}</option>
    </DropSelect>
    <DropArrow><Chevron /></DropArrow>
  </DropBox>
);

const Spin = ({ id, value }) => (
  <SpinBox>
    <SpinInput id={id} defaultValue={value} />
    <SpinSteps>
      <SpinStep type="button" aria-label="增加"><StepGlyph up color="#111" /></SpinStep>
      <SpinStep type="button" aria-label="减少"><StepGlyph color="#111" /></SpinStep>
    </SpinSteps>
  </SpinBox>
);

const tools = [
  ["save", { width: 20 }], ["saveAs"], ["print"], ["preview"], ["undo", { width: 20 }], "caret",
  ["redo"], ["paste"], ["brush"], ["letterA"], "font", "size",
  ["bold", { pressed: true }], ["underline", { width: 20 }], "caret", ["highlight"], "caret",
  ["clearFormat"], ["wrapLine"], ["bullets", { width: 20 }], "caret", ["numbering", { width: 20 }], "caret",
  ["borders", { width: 20 }], "caret", ["showMarks", { pressed: true }], ["replace"], ["justify"],
  ["table"], "tight", ["tableEdit", { disabled: true }], ["tableGrey", { disabled: true }],
  ["tableDelete", { disabled: true }], "tightDim", ["rowInsert", { framed: true }], ["rowSplit", { framed: true }],
  ["tableSplit", { disabled: true }], "tightDim", ["distributeRows"], ["distributeCols"],
  ["centerCell", { framed: true }], ["tableCopy"], ["tableErase"], ["bucket"], "caret",
  ["picture", { framed: true }], ["shapes"], "tight", ["textWidth"], ["textBox"], ["alignLeft"], "tight",
  ["groupSmall", { disabled: true }], "tightDim", ["gridlines"], "网格线", ["zoom100"],
  ["spelling", { framed: true }], ["simplify", { framed: true }], ["headerFooter", { framed: true }],
  ["mailMerge", { disabled: true }], "首页不同", ["insertPicture"], ["pi"], "tight", ["omega"], "tight",
];

const Combo = ({ label, value, width }) => (
  <ComboBox $width={width}>
    <ComboSelect aria-label={label} defaultValue={value}>
      <option>{value}</option>
    </ComboSelect>
    <ComboCaret><Triangle /></ComboCaret>
  </ComboBox>
);

const renderTool = (tool, i) => {
  if (Array.isArray(tool)) {
    const [name, o = {}] = tool;
    return (
      <Tool key={i} aria-label={name} $width={o.width} $framed={o.framed} $pressed={o.pressed} disabled={o.disabled}>
        <SmallIcon name={name} />
      </Tool>
    );
  }
  if (tool === "font") return <Combo key={i} label="字体" value="宋体 (中文正文)" width={89} />;
  if (tool === "size") return <Combo key={i} label="字号" value="二号" width={53} />;
  if (tool === "caret" || tool.startsWith("tight"))
    return (
      <ToolCaret key={i} $tight={tool !== "caret"} aria-label="更多">
        <Triangle $dim={tool === "tightDim"} />
      </ToolCaret>
    );
  return (
    <ToolCheck key={i}>
      <ToolCheckBox />
      {tool}
    </ToolCheck>
  );
};

const hNumbers = Array.from({ length: 29 }, (_, i) => i * 2 - 8);
const vNumbers = Array.from({ length: 23 }, (_, i) => i - 4);

const ParagraphDialog = () => (
  <DialogBox>
    <DialogTitle>
      <DialogName>段落</DialogName>
      <HelpButton aria-label="帮助">?</HelpButton>
      <button aria-label="关闭">
        <svg width="11" height="11" viewBox="0 0 11 11" aria-hidden="true">
          <path d="M.5.5l10 10M10.500.5l-10 10" stroke="#111" />
        </svg>
      </button>
    </DialogTitle>
    <DialogTabs>
      <DialogTab $width={98} $active>缩进和间距<Key k="I" /></DialogTab>
      <DialogTab $width={94}>换行和分页<Key k="P" /></DialogTab>
      <DialogTab $width={82}>中文版式<Key k="H" /></DialogTab>
    </DialogTabs>
    <Panel onSubmit={(e) => e.preventDefault()}>
      <Legend>常规</Legend>
      <FieldGrid $row={24}>
        <FieldLabel id="alignment" text="对齐方式" k="G" />
        <Drop id="alignment" value="左对齐" focused />
        <span />
        <span />
        <FieldLabel id="outline" text="大纲级别" k="O" />
        <Drop id="outline" value="1 级" />
      </FieldGrid>
      <Legend $space={22}>缩进</Legend>
      <FieldGrid $row={22}>
        <FieldLabel id="left" text="左侧" k="L" />
        <Spin id="left" value="0 字符" />
        <FieldLabel id="special" text="特殊格式" k="S" />
        <FieldLabel id="by" text="磅值" k="Y" />
        <FieldLabel id="right" text="右侧" k="R" />
        <Spin id="right" value="18 字符" />
        <Drop id="special" value="(无)" />
        <Spin id="by" value="" />
      </FieldGrid>
      <CheckList $space={5}>
        <CheckRow><CheckInput /><span>对称缩进<Key k="M" /></span></CheckRow>
        <CheckRow><CheckInput defaultChecked /><span>如果定义了文档网格，则自动调整右缩进<Key k="D" /></span></CheckRow>
      </CheckList>
      <Legend>间距</Legend>
      <FieldGrid $row={22}>
        <FieldLabel id="before" text="段前" k="B" />
        <Spin id="before" value="0 行" />
        <FieldLabel id="spacing" text="行距" k="N" />
        <FieldLabel id="at" text="设置值" k="A" />
        <FieldLabel id="after" text="段后" k="F" />
        <Spin id="after" value="0 行" />
        <Drop id="spacing" value="最小值" />
        <Spin id="at" value="12 磅" />
      </FieldGrid>
      <CheckList $space={1}>
        <CheckRow><CheckInput /><span>在相同样式的段落间不添加空格<Key k="C" /></span></CheckRow>
        <CheckRow><CheckInput defaultChecked /><span>如果定义了文档网格，则对齐到网格<Key k="W" /></span></CheckRow>
      </CheckList>
      <Legend $space={4}>预览</Legend>
      <Preview>
        {[10, 10, 5].map((n, i) => <PreviewLine key={i}>{"前一段落".repeat(n)}</PreviewLine>)}
        <PreviewLine $current>段落设置了“右缩进”格式，</PreviewLine>
        {[10, 10, 10, 4].map((n, i) => <PreviewLine key={i}>{"下一段落".repeat(n)}</PreviewLine>)}
      </Preview>
    </Panel>
    <DialogActions>
      <ActionButton $width={89} $apart>制表位<Key k="T" tail="..." /></ActionButton>
      <ActionButton $width={77} $apart>默认<Key k="D" tail="..." /></ActionButton>
      <ActionButton $width={74} $primary>确定</ActionButton>
      <ActionButton $width={74}>取消</ActionButton>
    </DialogActions>
    <Arrow $left={108} $top={208} width="29" height="64" viewBox="0 0 29 64">
      <path d="M15 4L27 34h-5v29H8V34H2z" fill="none" stroke={ORANGE} strokeWidth="3" />
    </Arrow>
  </DialogBox>
);

export default function App() {
  return (
    <Window lang="zh-CN">
      <GlobalStyle />
      <TitleBar>{"Doc1.docx  -  Microsoft Word"}</TitleBar>
      <OrbButton aria-label="Office 按钮"><Orb /></OrbButton>
      <TabStrip>
        {["开始", "插入", "页面布局", "引用", "邮件", "审阅", "视图"].map((t) => (
          <RibbonTab key={t} $active={t === "页面布局"}>{t}</RibbonTab>
        ))}
      </TabStrip>

      <Ribbon>
        <Group title="主题" width={109}>
          <Command icon="theme" label="主题" width={46} />
          <SmallColumn $indent={1}>
            <SmallCommand icon="colors" label="颜色" />
            <SmallCommand icon="fonts" label="字体" />
            <SmallCommand icon="effects" label="效果" />
          </SmallColumn>
        </Group>
        <Group title="页面设置" width={322} launcher>
          <Command icon="textdir" label="文字方向" width={54} />
          <Command icon="margins" label="页边距" width={42} />
          <Command icon="orient" label="纸张方向" width={54} />
          <Command icon="size" label="纸张大小" width={52} />
          <Command icon="columns" label="分栏" width={44} />
          <SmallColumn $indent={2}>
            <SmallCommand icon="breaks" label="分隔符" />
            <SmallCommand icon="linenum" label="行号" />
            <SmallCommand icon="hyphen" label="断字" />
          </SmallColumn>
        </Group>
        <Group title="页面背景" width={143}>
          <Command icon="watermark" label="水印" width={44} />
          <Command icon="pagecolor" label="页面颜色" width={52} />
          <Command icon="pageborder" label="页面" second="边框" width={42} noCaret />
        </Group>
        <Group title="段落" width={270} launcher>
          <MeasureColumn>
            <MeasureTitle>缩进</MeasureTitle>
            <Measure id="ribbon-left" icon="indentLeft" label="左:" labelWidth={24} value="0 字符" />
            <Measure id="ribbon-right" icon="indentRight" label="右:" labelWidth={24} value="18 字符" />
          </MeasureColumn>
          <ColumnRule />
          <MeasureColumn>
            <MeasureTitle>间距</MeasureTitle>
            <Measure id="ribbon-before" icon="spaceBefore" label="段前:" labelWidth={38} value="0 行" />
            <Measure id="ribbon-after" icon="spaceAfter" label="段后:" labelWidth={38} value="0 行" />
          </MeasureColumn>
        </Group>
        <Group title="排列" width={334}>
          <Command icon="position" label="位置" width={44} disabled />
          <Command icon="front" label="置于顶层" width={52} disabled />
          <Command icon="back" label="置于底层" width={54} disabled />
          <Command icon="wrap" label="文字环绕" width={52} disabled />
          <Command icon="align" label="对齐" width={42} />
          <Command icon="group" label="组合" width={42} disabled />
          <Command icon="rotate" label="旋" second="转" width={42} disabled />
        </Group>
      </Ribbon>

      <QuickBar>{tools.map(renderTool)}</QuickBar>

      <Workspace>
        <TabCorner aria-label="制表符">
          <svg width="14" height="14" viewBox="0 0 14 14" aria-hidden="true">
            <rect x=".5" y=".5" width="13" height="13" fill="#e6eefa" stroke="#5f83bd" />
            <path d="M5 4v6h6" fill="none" stroke="#222" strokeWidth="2" />
          </svg>
        </TabCorner>
        <RulerRow>
          <HRuler>
            <HScale>
              <HCells>
                {hNumbers.map((n) => (
                  <HCell key={n}>
                    <HNumber $notch={n > 0 && n < 40}>{n === 0 ? "" : Math.abs(n)}</HNumber>
                  </HCell>
                ))}
              </HCells>
            </HScale>
            <IndentMark $left={140} $top={-3} width="10" height="20" viewBox="0 0 10 20">
              <path d="M.5.5h8v3l-4 4-4-4zM.5 12.500v-1l4-4 4 4v1z M.5 14.500h8v4h-8z" fill="#dfe8f5" stroke="#54719f" />
            </IndentMark>
            <IndentMark $left={501} $top={4} width="10" height="9" viewBox="0 0 10 9">
              <path d="M.5 8.500v-4l4-4 4 4v4z" fill="#cfdcee" stroke="#54719f" />
            </IndentMark>
          </HRuler>
        </RulerRow>
        <RulerColumn>
          <VRuler>
            {vNumbers.map((n) => <VCell key={n}>{n === 0 ? "" : Math.abs(n)}</VCell>)}
          </VRuler>
        </RulerColumn>
        <Canvas>
          <Swoosh width="340" height="130" viewBox="0 0 340 130" aria-hidden="true">
            <path d="M0 0h330Q130 30 0 94z" fill="#fff" opacity=".13" />
            <path d="M0 94Q130 30 330 0h10Q150 40 0 118z" fill="#fff" opacity=".08" />
          </Swoosh>
          <Page>
            <HeaderLine><ReturnMark>↵</ReturnMark></HeaderLine>
            <CropRow>
              <CropMark $side="right" />
              <CropMark $side="left" />
            </CropRow>
            <TextArea>
              <Paragraph $indent={308}>
                <Selection>段落设置了“右缩进”</Selection>格式，<ReturnMark>↵</ReturnMark>
              </Paragraph>
              <Paragraph $strong>
                段落设置了<Punct>“</Punct>右缩进<Punct>”</Punct>格式<Punct>，</Punct>段落设置了<Punct>“</Punct>右缩进”格式，<ReturnMark>↵</ReturnMark>
              </Paragraph>
            </TextArea>
            <Arrow $left={508} $top={120} width="298" height="50" viewBox="0 0 298 50">
              <path d="M4 25L150 3v11h145v23H150v10z" fill="none" stroke={ORANGE} strokeWidth="3" />
            </Arrow>
          </Page>
        </Canvas>
      </Workspace>

      <ParagraphDialog />
      <Arrow $left={166} $top={46} width="42" height="144" viewBox="0 0 42 144">
        <path d="M21 4L39 72h-8v70H12V72H3z" fill="none" stroke={ORANGE} strokeWidth="3" />
      </Arrow>
    </Window>
  );
}
